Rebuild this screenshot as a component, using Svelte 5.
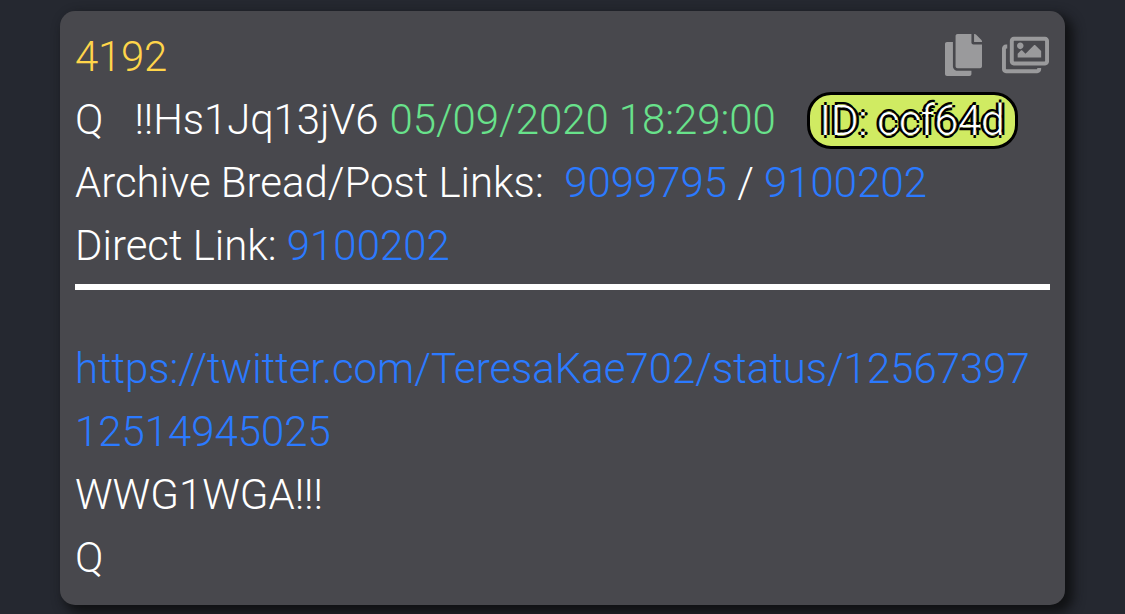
<script>
  const url = 'https://twitter.com/TeresaKae702/status/1256739712514945025';
</script>

<main>
  <article>
    <header>
      <div class="line top">
        <span class="number">4192</span>
        <div class="icons">
          <svg width="37" height="42" viewBox="0 0 448 512" preserveAspectRatio="none" fill="#9a9a9c"><path d="M320 448v40c0 13.255-10.745 24-24 24H24c-13.255 0-24-10.745-24-24V120c0-13.255 10.745-24 24-24h72v296c0 30.879 25.121 56 56 56h168zm0-344V0H152c-13.255 0-24 10.745-24 24v368c0 13.255 10.745 24 24 24h272c13.255 0 24-10.745 24-24V128H344c-13.2 0-24-10.8-24-24zm120.971-31.029L375.029 7.029A24 24 0 0 0 358.059 0H352v96h96v-6.059a24 24 0 0 0-7.029-16.97z"/></svg>
          <svg width="47" height="42" viewBox="0 0 576 512" fill="#9a9a9c"><path d="M480 416v16c0 26.51-21.49 48-48 48H48c-26.51 0-48-21.49-48-48V176c0-26.51 21.49-48 48-48h16v48H54a6 6 0 0 0-6 6v244a6 6 0 0 0 6 6h372a6 6 0 0 0 6-6v-10h48zm42-336H150a6 6 0 0 0-6 6v244a6 6 0 0 0 6 6h372a6 6 0 0 0 6-6V86a6 6 0 0 0-6-6zm6-48c26.51 0 48 21.49 48 48v256c0 26.51-21.49 48-48 48H144c-26.51 0-48-21.49-48-48V80c0-26.51 21.49-48 48-48h384zM264 144c0 22.091-17.909 40-40 40s-40-17.909-40-40 17.909-40 40-40 40 17.909 40 40zm-72 96l39.515-39.515c4.686-4.686 12.284-4.686 16.971 0L288 240l103.515-103.515c4.686-4.686 12.284-4.686 16.971 0L480 208v80H192v-48z"/></svg>
        </div>
      </div>
      <div class="line meta"><span>Q</span><span class="trip">!!Hs1Jq13jV6</span><time>05/09/2020 18:29:00</time><span class="badge">ID: ccf64d</span></div>
      <div class="line">Archive Bread/Post Links:&nbsp; <a href="#bread">9099795</a> / <a href="#post">9100202</a></div>
      <div class="line">Direct Link: <a href="#direct">9100202</a></div>
    </header>
    <section>
      <a href={url}>{url}</a>
      <div>WWG1WGA!!!</div>
      <div>Q</div>
    </section>
  </article>
</main>

<style>
  :global(body) { background: #252830; overflow: hidden; }
  main { height: 614px; padding: 11px 60px 0; box-sizing: border-box; overflow: hidden; }
  article { height: 594px; box-sizing: border-box; padding: 14px 15px; border-radius: 15px; background: #48484d; color: #fff; font: 300 41.94px/63px Roboto, sans-serif; box-shadow: 6px 6px 12px 2px #101113; }
  header { height: 265px; box-sizing: border-box; border-bottom: 6px solid #fff; }
  .line { height: 63px; white-space: nowrap; }
  .top { display: flex; justify-content: space-between; }
  .number { color: #ffd54a; letter-spacing: -0.3px; }
  .icons { display: flex; gap: 20px; padding: 9px 1px 0 0; }
  .meta { display: flex; }
  .trip { margin-left: 31px; letter-spacing: -0.08px; }
  time { color: #68e28b; margin-left: 11px; letter-spacing: -0.02px; }
  .badge { height: 57px; width: 211px; line-height: 51px; box-sizing: border-box; margin: 4px 0 0 31px; padding: 0 10px; border: 3px solid #000; border-radius: 24px; background: #d0eb62; text-shadow: -3px 0 0 #000, 3px 0 0 #000, 0 -3px 0 #000, 0 3px 0 #000; }
  a { color: #2b7aff; text-decoration: none; }
  section { padding-top: 47px; }
  section a { display: block; word-break: break-all; }
</style>
